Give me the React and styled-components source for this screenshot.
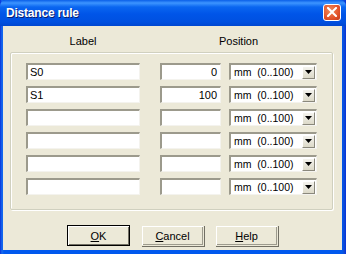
import React from 'react'
import styled, { createGlobalStyle } from 'styled-components';

const rows = [
  { label: 'S0', pos: '0' },
  { label: 'S1', pos: '100' },
  { label: '', pos: '' },
  { label: '', pos: '' },
  { label: '', pos: '' },
  { label: '', pos: '' },
];

export default function App() {
  return (
    <>
      <Global />
      <Window>
        <TitleBar>
          <Title>Distance rule</Title>
          <CloseButton>
            <svg width="10" height="10" viewBox="0 0 10 10">
              <path d="M1 1 L9 9 M9 1 L1 9" stroke="#fff" strokeWidth="2" strokeLinecap="square" />
            </svg>
          </CloseButton>
        </TitleBar>
        <Client>
          <Headers>
            <span>Label</span>
            <span>Position</span>
          </Headers>
          <GroupBox>
            {rows.map((r, i) => (
              <React.Fragment key={i}>
                <Field $w={114}>{r.label}</Field>
                <Field $w={61} $right>{r.pos}</Field>
                <Combo $w={88}>
                  <span>mm&nbsp;&nbsp;(0..100)</span>
                  <DropButton>
                    <svg width="7" height="4" viewBox="0 0 7 4">
                      <path d="M0 0 H7 L3.5 4 Z" fill="#000" />
                    </svg>
                  </DropButton>
                </Combo>
              </React.Fragment>
            ))}
          </GroupBox>
          <Buttons>
            <Button $default><u>O</u>K</Button>
            <Button><u>C</u>ancel</Button>
            <Button><u>H</u>elp</Button>
          </Buttons>
        </Client>
      </Window>
    </>
  )
}

const Global = createGlobalStyle`
body{
    margin:0;
    background:#0055e5;
    font-family:"Liberation Sans", Arial, sans-serif;
}
`;

const Window = styled.div`
width:346px;
height:254px;
box-sizing:border-box;
display:flex;
flex-direction:column;
background:linear-gradient(90deg,#0831d9 0,#166aee 2px,#0058ee 4px,#0058ee 342px,#0e4cd6 344px,#0831d9 346px);
padding:0 4px 4px 3px;
`;

const TitleBar = styled.div`
height:26px;
margin:0 -4px 0 -3px;
padding:0 5px 0 6px;
display:flex;
align-items:center;
justify-content:space-between;
background:linear-gradient(180deg,#0a5fe8 0,#3d95ff 3px,#0a66f0 7px,#0055e8 14px,#0050e0 22px,#0047d0 26px);
border-radius:6px 6px 0 0;
`;

const Title = styled.div`
color:#fff;
font-weight:bold;
font-size:12px;
text-shadow:1px 1px 0 #0a1e6e;
letter-spacing:-0.2px;
`;

const CloseButton = styled.div`
width:18px;
height:17px;
box-sizing:border-box;
margin-top:-2px;
border:1px solid #fff;
border-radius:3px;
background:radial-gradient(circle at 40% 35%,#f08a5c 0,#e2532a 60%,#c2391a 100%);
display:flex;
align-items:center;
justify-content:center;
`;

const Client = styled.div`
flex:1;
background:#ece9d8;
display:flex;
flex-direction:column;
padding:0 9px 0 7px;
font-size:11px;
color:#000;
`;

const Headers = styled.div`
display:grid;
grid-template-columns:114px 157px;
column-gap:20px;
padding-left:16px;
height:26px;
align-items:center;
span{
    text-align:center;
    padding-top:4px;
}
`;

const GroupBox = styled.div`
border:1px solid #d0d0bf;
box-shadow:inset 1px 1px 0 #fff, 1px 1px 0 #fff;
border-radius:2px;
display:grid;
grid-template-columns:134px 69px 88px;
row-gap:6px;
padding:10px 15px 14px 15px;
`;

const Field = styled.div`
width:${p => p.$w}px;
height:17px;
box-sizing:border-box;
background:#fff;
border-top:2px solid #9c9a8c;
border-left:2px solid #9c9a8c;
border-right:1px solid #f4f3ee;
border-bottom:1px solid #f4f3ee;
padding:0 3px 0 2px;
line-height:15px;
text-align:${p => (p.$right ? 'right' : 'left')};
font-size:11px;
`;

const Combo = styled(Field)`
display:flex;
align-items:center;
justify-content:space-between;
padding:0 1px 0 3px;
span{
    font-size:10.5px;
}
`;

const DropButton = styled.div`
width:13px;
height:13px;
box-sizing:border-box;
background:linear-gradient(180deg,#f4f3ee,#dcd9c8);
border-right:1px solid #8a887c;
border-bottom:1px solid #8a887c;
border-top:1px solid #fff;
border-left:1px solid #fff;
display:flex;
align-items:center;
justify-content:center;
`;

const Buttons = styled.div`
display:flex;
justify-content:center;
gap:11px;
padding:15px 0 0 2px;
`;

const Button = styled.div`
width:63px;
height:21px;
box-sizing:border-box;
display:flex;
align-items:center;
justify-content:center;
background:#ece9d8;
border:1px solid ${p => (p.$default ? '#000' : '#ece9d8')};
box-shadow:${p => (p.$default
    ? 'inset 1px 1px 0 #fff, inset -1px -1px 0 #716f64'
    : 'inset 1px 1px 0 #fff, inset -1px -1px 0 #9d9b8e, 1px 1px 0 #716f64')};
font-size:11px;
u{
    text-decoration-thickness:1px;
}
`;
